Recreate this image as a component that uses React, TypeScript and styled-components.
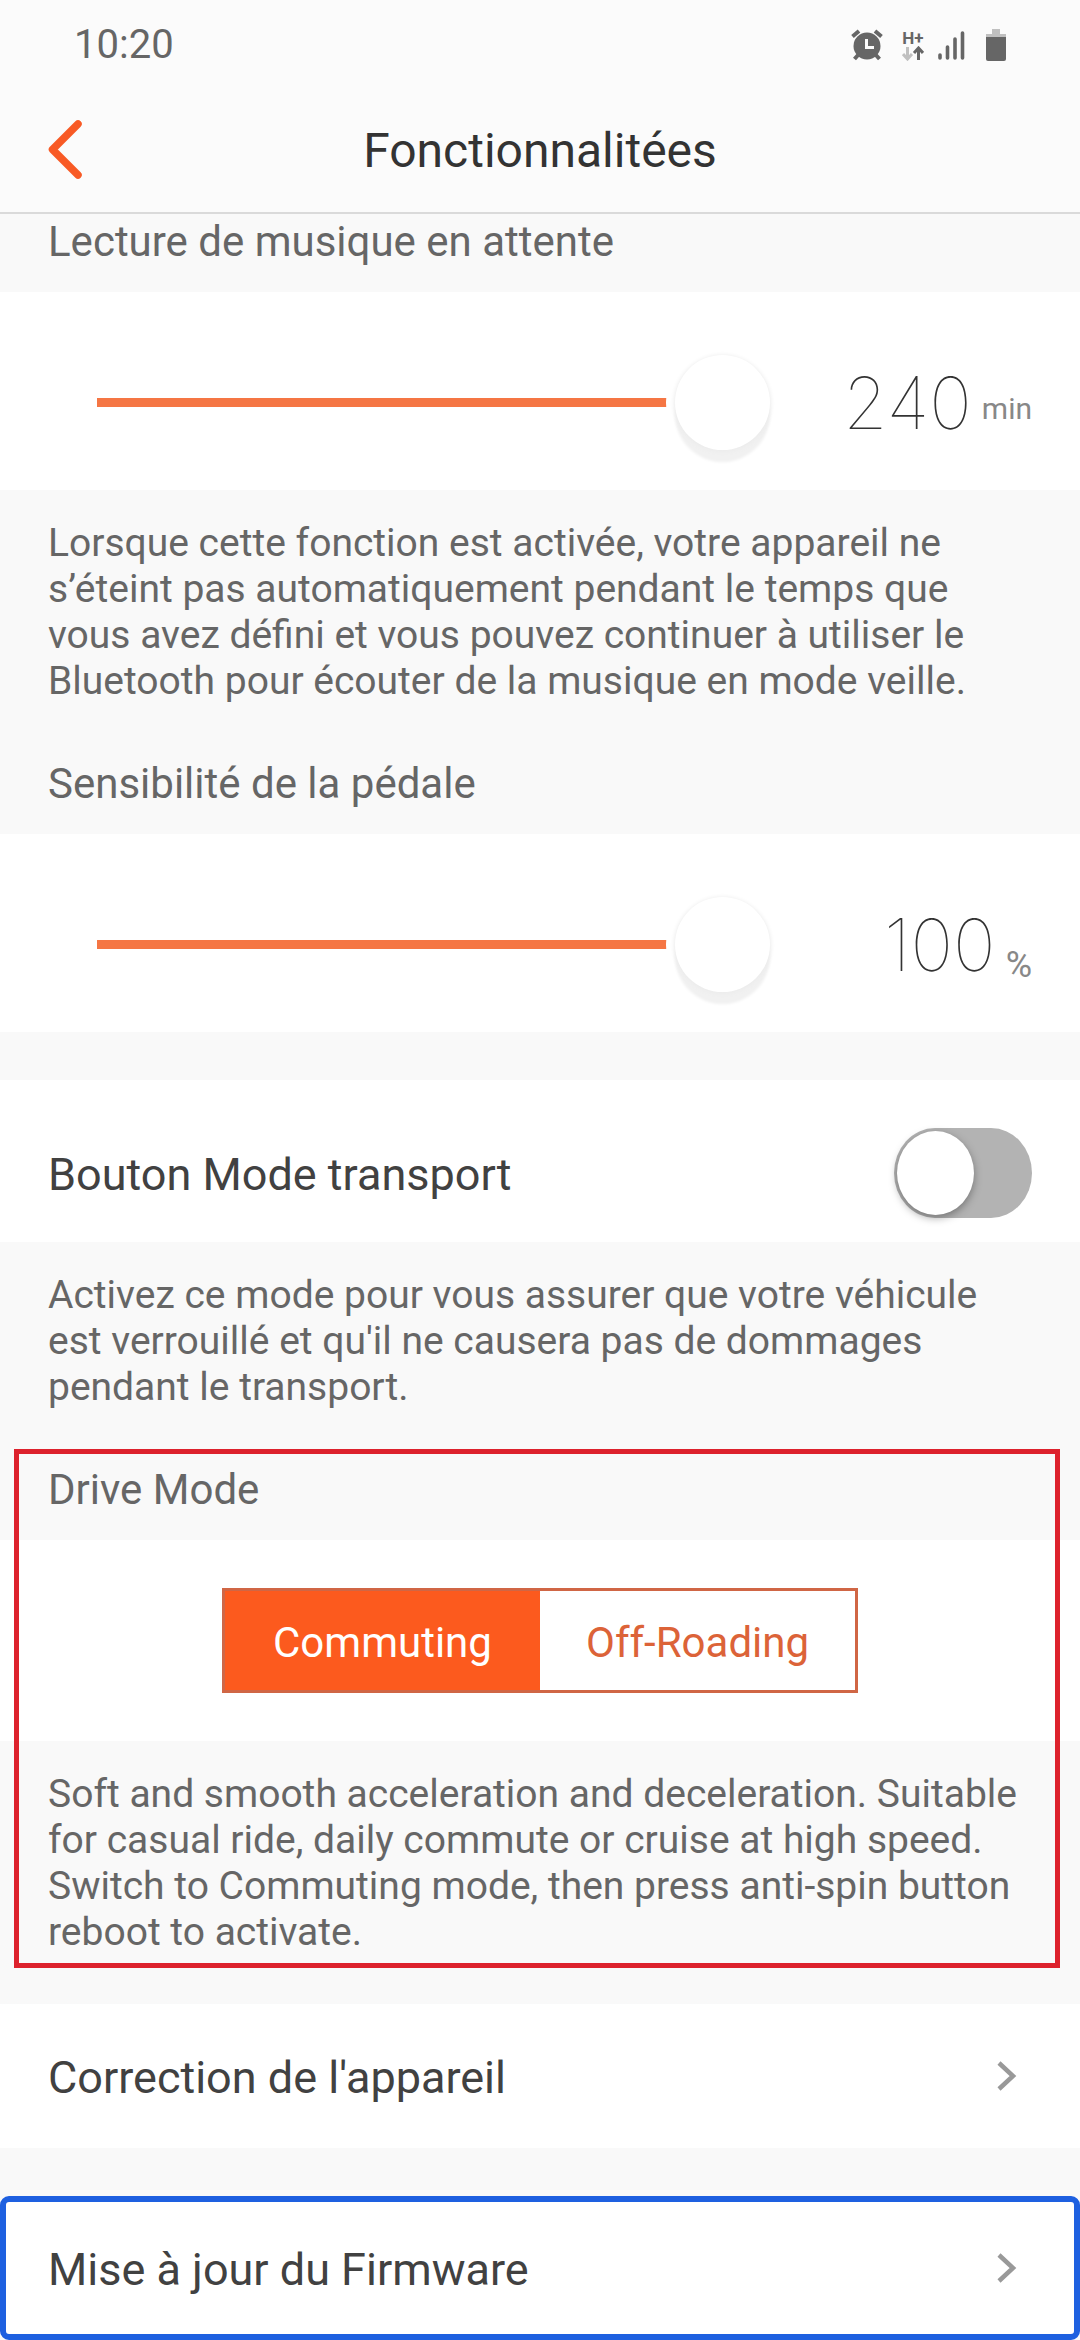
import React, { useState } from "react";
import styled, { createGlobalStyle, css } from "styled-components";

const GlobalStyle = createGlobalStyle`
  *, *::before, *::after { box-sizing: border-box; }
  body {
    margin: 0;
    background: #f9f9f9;
    color: #414141;
    font-family: Roboto, "Noto Sans", sans-serif;
  }
  button, input { font: inherit; margin: 0; }
  h1, h2, p { margin: 0; font-weight: 400; }
`;

const StatusBar = styled.div`
  display: flex;
  align-items: center;
  justify-content: space-between;
  height: 90px;
  padding: 0 74px;
  background: #fbfbfb;
  color: #666;
  font-size: 40px;
  line-height: 48px;
`;

const StatusIcons = styled.div`
  display: flex;
  align-items: center;
  svg { display: block; }
`;

const Network = styled.span`
  display: flex;
  flex-direction: column;
  align-items: center;
  width: 22px;
  margin: 0 14px 0 19px;
  font-size: 17px;
  font-weight: 700;
  line-height: 16px;
`;

const Battery = styled.span`
  margin-left: 21px;
`;

const Toolbar = styled.header`
  display: grid;
  grid-template-columns: 48px 1fr 48px;
  align-items: center;
  height: 124px;
  padding: 0 41px;
  background: #fbfbfb;
  border-bottom: 2px solid #dadada;
`;

const BackButton = styled.button`
  display: flex;
  padding: 0;
  border: 0;
  background: none;
  cursor: pointer;
`;

const Title = styled.h1`
  text-align: center;
  color: #333;
  font-size: 48px;
  line-height: 56px;
`;

const Heading = styled.h2<{ $tight?: boolean }>`
  padding: ${(p) => (p.$tight ? "4px" : "56px")} 48px 26px;
  color: #666;
  font-size: 42px;
  line-height: 48px;
`;

const Note = styled.p`
  padding: 30px 48px 0;
  color: #666;
  font-size: 39px;
  line-height: 46px;
`;

const Spacer = styled.div`
  height: 48px;
`;

const SliderCard = styled.div`
  display: flex;
  align-items: center;
  padding: 63px 48px 40px 97px;
  background: #fff;
`;

const Range = styled.input`
  flex: 1;
  min-width: 0;
  height: 95px;
  appearance: none;
  background: none;
  &::-webkit-slider-runnable-track {
    height: 9px;
    background: #f57644;
  }
  &::-webkit-slider-thumb {
    appearance: none;
    width: 95px;
    height: 95px;
    margin-top: -43px;
    border-radius: 50%;
    background: #fff;
    box-shadow: 0 1px 4px 1px #ececec, 0 12px 3px #f1f1f1, 0 0 0 9px #fff;
  }
`;

const Reading = styled.output`
  display: flex;
  flex: 0 0 262px;
  align-items: center;
  justify-content: flex-end;
  gap: 10px;
  color: #333;
  font-family: Inter, Roboto, sans-serif;
  font-size: 72px;
  font-weight: 100;
  font-optical-sizing: none;
  line-height: 72px;
`;

const Unit = styled.span<{ $low?: boolean }>`
  color: #888;
  font-family: Roboto, sans-serif;
  font-weight: 400;
  ${(p) =>
    p.$low
      ? css`
          align-self: flex-end;
          font-size: 36px;
          line-height: 32px;
        `
      : css`
          padding-top: 12px;
          font-size: 30px;
          line-height: 36px;
        `}
`;

const RowLabel = styled.span`
  padding-top: 4px;
  font-size: 45px;
  line-height: 54px;
`;

const ToggleRow = styled.label`
  display: flex;
  align-items: center;
  justify-content: space-between;
  padding: 48px 48px 24px;
  background: #fff;
`;

const Switch = styled.input`
  appearance: none;
  flex: none;
  width: 138px;
  height: 90px;
  padding: 3px;
  border-radius: 41px / 45px;
  background: #b3b3b3;
  &::before {
    content: "";
    display: block;
    width: 77px;
    height: 84px;
    border-radius: 50%;
    background: #fff;
    box-shadow: 0 3px 8px rgba(0, 0, 0, 0.35);
  }
  &:checked { background: #fb5b1f; }
  &:checked::before { margin-left: auto; }
`;

const Highlighted = styled.section`
  position: relative;
  padding-bottom: 1px;
  &::after {
    content: "";
    position: absolute;
    inset: 39px 20px -12px 14px;
    border: 5px solid #dd222d;
    pointer-events: none;
  }
`;

const SegmentCard = styled.div`
  display: flex;
  justify-content: center;
  padding: 48px;
  background: #fff;
`;

const Segments = styled.div`
  display: grid;
  grid-template-columns: 1fr 1fr;
  border: 3px solid #d06645;
`;

const Segment = styled.button<{ $active: boolean }>`
  height: 99px;
  padding: 4px 46px 0;
  border: 0;
  background: ${(p) => (p.$active ? "#fc5a1e" : "#fff")};
  color: ${(p) => (p.$active ? "#fff" : "#dc6338")};
  font-size: 42px;
  line-height: 48px;
`;

const LinkRow = styled.a<{ $focused?: boolean }>`
  display: flex;
  align-items: center;
  justify-content: space-between;
  height: 144px;
  padding: 0 62px 0 48px;
  background: #fff;
  color: inherit;
  text-decoration: none;
  ${(p) =>
    p.$focused &&
    css`
      padding: 0 56px 0 42px;
      border: 6px solid #1e60e0;
      border-radius: 9px;
    `}
`;

function AlarmIcon() {
  return (
    <svg width="32" height="32" viewBox="0 0 32 32" aria-hidden="true">
      <g stroke="#666" strokeWidth="4">
        <path d="M1.5 7.5 8 2M30.500 7.500 24 2" />
        <path d="M8 25 3.500 30M24 25l4.500 5" />
      </g>
      <circle cx="16" cy="17" r="13.500" fill="#666" />
      <path d="M15.500 10v8.500H23" fill="none" stroke="#fbfbfb" strokeWidth="3" />
    </svg>
  );
}

function TrafficArrows() {
  return (
    <svg width="22" height="15" viewBox="0 0 22 15" aria-hidden="true">
      <path d="M5.500 1v11M1 8l4.500 5L10 8" fill="none" stroke="#c0c0c0" strokeWidth="3" />
      <path d="M16.500 14V3M12 7l4.500-5L21 7" fill="none" stroke="#666" strokeWidth="3" />
    </svg>
  );
}

function SignalIcon() {
  return (
    <svg width="27" height="30" viewBox="0 0 27 30" aria-hidden="true">
      <path
        d="M2 25v3M9.500 17v11M17 9v19M24.500 3v25"
        stroke="#666"
        strokeWidth="3.600"
        strokeLinecap="round"
      />
    </svg>
  );
}

function BatteryIcon() {
  return (
    <svg width="20" height="32" viewBox="0 0 20 32" aria-hidden="true">
      <path d="M6 0h8v5h6v4H0V5h6z" fill="#c0c0c0" />
      <path d="M0 8h20v22q0 2-2 2H2q-2 0-2-2z" fill="#666" />
    </svg>
  );
}

function BackIcon() {
  return (
    <svg width="48" height="64" viewBox="0 0 48 64" aria-hidden="true">
      <path
        d="M37 5 11.500 30.500 37 56"
        fill="none"
        stroke="#f85a25"
        strokeWidth="7.500"
        strokeLinecap="round"
        strokeLinejoin="round"
      />
    </svg>
  );
}

function ChevronIcon() {
  return (
    <svg width="22" height="32" viewBox="0 0 22 32" aria-hidden="true">
      <path
        d="M3 3 17 16 3 29"
        fill="none"
        stroke="#999"
        strokeWidth="4.500"
      />
    </svg>
  );
}

interface SliderProps {
  label: string;
  max: number;
  unit: string;
  lowUnit?: boolean;
}

function Slider({ label, max, unit, lowUnit }: SliderProps) {
  const [value, setValue] = useState(max);
  return (
    <SliderCard>
      <Range
        type="range"
        aria-label={label}
        min={0}
        max={max}
        value={value}
        onChange={(e) => setValue(Number(e.target.value))}
      />
      <Reading>
        <span>{value}</span>
        <Unit $low={lowUnit}>{unit}</Unit>
      </Reading>
    </SliderCard>
  );
}

const MODES = ["Commuting", "Off-Roading"];

export default function App() {
  const [mode, setMode] = useState(MODES[0]);
  const [transport, setTransport] = useState(false);

  return (
    <>
      <GlobalStyle />
      <StatusBar>
        <span>10:20</span>
        <StatusIcons>
          <AlarmIcon />
          <Network>
            H+
            <TrafficArrows />
          </Network>
          <SignalIcon />
          <Battery>
            <BatteryIcon />
          </Battery>
        </StatusIcons>
      </StatusBar>
      <Toolbar>
        <BackButton type="button" aria-label="Retour">
          <BackIcon />
        </BackButton>
        <Title>Fonctionnalitées</Title>
      </Toolbar>
      <main>
        <section>
          <Heading $tight>Lecture de musique en attente</Heading>
          <Slider label="Lecture de musique en attente" max={240} unit="min" />
          <Note>
            Lorsque cette fonction est activée, votre appareil ne s’éteint pas
            automatiquement pendant le temps que vous avez défini et vous pouvez
            continuer à utiliser le Bluetooth pour écouter de la musique en mode
            veille.
          </Note>
        </section>
        <section>
          <Heading>Sensibilité de la pédale</Heading>
          <Slider label="Sensibilité de la pédale" max={100} unit="%" lowUnit />
        </section>
        <Spacer />
        <section>
          <ToggleRow>
            <RowLabel>Bouton Mode transport</RowLabel>
            <Switch
              type="checkbox"
              role="switch"
              checked={transport}
              onChange={(e) => setTransport(e.target.checked)}
            />
          </ToggleRow>
          <Note>
            Activez ce mode pour vous assurer que votre véhicule est verrouillé
            et qu'il ne causera pas de dommages pendant le transport.
          </Note>
        </section>
        <Highlighted>
          <Heading>Drive Mode</Heading>
          <SegmentCard>
            <Segments>
              {MODES.map((name) => (
                <Segment
                  key={name}
                  type="button"
                  aria-pressed={mode === name}
                  $active={mode === name}
                  onClick={() => setMode(name)}
                >
                  {name}
                </Segment>
              ))}
            </Segments>
          </SegmentCard>
          <Note>
            Soft and smooth acceleration and deceleration. Suitable for casual
            ride, daily commute or cruise at high speed. Switch to Commuting
            mode, then press anti-spin button reboot to activate.
          </Note>
        </Highlighted>
        <Spacer />
        <LinkRow href="#correction">
          <RowLabel>Correction de l'appareil</RowLabel>
          <ChevronIcon />
        </LinkRow>
        <Spacer />
        <LinkRow href="#firmware" $focused>
          <RowLabel>Mise à jour du Firmware</RowLabel>
          <ChevronIcon />
        </LinkRow>
      </main>
    </>
  );
}
